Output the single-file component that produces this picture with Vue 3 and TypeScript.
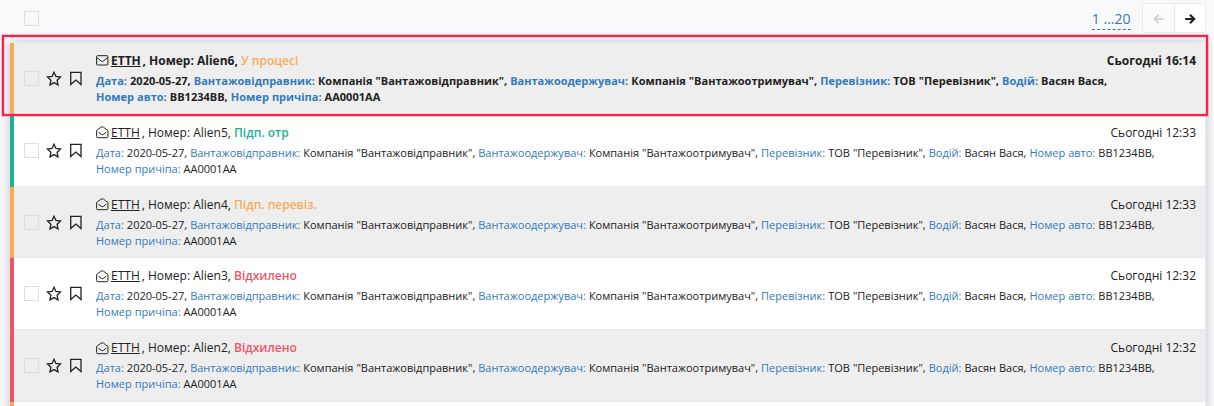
<script setup lang="ts">
interface Row {
  id: string
  status: string
  color: string
  stripe: string
  time: string
  unread?: boolean
  odd?: boolean
}

const ORANGE = '#f8ac59'
const GREEN = '#1ab394'
const RED = '#ed5565'

const rows: Row[] = [
  { id: 'Alien6', status: 'У процесі', color: ORANGE, stripe: ORANGE, time: '16:14', unread: true, odd: true },
  { id: 'Alien5', status: 'Підп. отр', color: GREEN, stripe: GREEN, time: '12:33' },
  { id: 'Alien4', status: 'Підп. перевіз.', color: ORANGE, stripe: ORANGE, time: '12:33', odd: true },
  { id: 'Alien3', status: 'Відхилено', color: RED, stripe: RED, time: '12:32' },
  { id: 'Alien2', status: 'Відхилено', color: RED, stripe: RED, time: '12:32', odd: true },
]

const details: [string, string][] = [
  ['Дата:', '2020-05-27,'],
  ['Вантажовідправник:', 'Компанія "Вантажовідправник",'],
  ['Вантажоодержувач:', 'Компанія "Вантажоотримувач",'],
  ['Перевізник:', 'ТОВ "Перевізник",'],
  ['Водій:', 'Васян Вася,'],
  ['Номер авто:', 'BB1234BB,'],
  ['Номер причіпа:', 'AA0001AA'],
]
</script>

<template>
  <div class="page">
    <header class="toolbar">
      <span class="check"></span>
      <span class="range">1 ...20</span>
      <div class="pager">
        <button class="prev" type="button">
          <svg width="11" height="10" viewBox="0 0 11 10"><path d="M10.4 5H1.8M5.6.8L1.4 5l4.200 4.200" /></svg>
        </button>
        <button class="next" type="button">
          <svg width="11" height="10" viewBox="0 0 11 10"><path d="M.2 5h8.600M5 .8L9.200 5 5 9.200" /></svg>
        </button>
      </div>
    </header>

    <main class="list">
      <article v-for="row in rows" :key="row.id" class="row" :class="{ odd: row.odd, unread: row.unread }">
        <i class="stripe" :style="{ background: row.stripe }"></i>
        <span class="check"></span>
        <svg class="star" width="16" height="15" viewBox="0 0 16 15">
          <path d="M8 1.3l1.9 4.2 4.7.5-3.5 3.2.9 4.7L8 11.6l-4 2.3.9-4.7L1.4 6l4.7-.5z" />
        </svg>
        <svg class="mark" width="12" height="15" viewBox="0 0 12 15">
          <path d="M.7 1.3h10.300v12.200L5.850 9.100.7 13.500z" />
        </svg>
        <div class="body">
          <div class="head">
            <svg v-if="row.unread" class="mail" width="13" height="13" viewBox="0 0 13 13">
              <rect x=".6" y="1.7" width="11.3" height="9.3" rx=".8" />
              <path d="M.8 3.6l4.700 3.700q.8.5 1.500 0l4.700-3.700" />
            </svg>
            <svg v-else class="mail" width="13" height="13" viewBox="0 0 13 13">
              <path d="M.6 4.5L5.1 1.2q1.2-.8 2.4 0l4.4 3.3v6q0 1.2-1.1 1.2H1.7Q.6 11.7.6 10.5z" />
              <path d="M2.4 6.3l3.100 2.200q.8.5 1.600 0l3.100-2.200" />
            </svg>
            <span class="title"><u>ЕТТН</u><span class="num">, Номер: {{ row.id }}, </span><b :style="{ color: row.color }">{{ row.status }}</b></span>
            <span class="time">Сьогодні {{ row.time }}</span>
          </div>
          <p class="details">
            <template v-for="[label, value] in details" :key="label"><span class="pair"><span class="label">{{ label }}</span> {{ value }}</span>{{ ' ' }}</template>
          </p>
        </div>
      </article>
      <div class="row upcoming"><i class="stripe orange"></i></div>
    </main>
    <div class="highlight"></div>
  </div>
</template>

<style>
body {
  overflow: hidden;
}
</style>

<style scoped>
.page {
  position: relative;
  box-sizing: border-box;
  width: 1214px;
  height: 406px;
  overflow: hidden;
  background: #f9f9fb;
  color: #212121;
  font: 12px/17px 'Open Sans', 'Noto Sans', sans-serif;
}
.toolbar {
  display: flex;
  align-items: flex-start;
  height: 41.85px;
  padding-left: 24px;
  padding-right: 8px;
}
.check {
  box-sizing: border-box;
  flex: none;
  width: 15px;
  height: 15px;
  border: 1px solid #ddddd9;
}
.toolbar .check {
  margin-top: 11px;
}
.range {
  height: 20px;
  margin: 9px 11.5px 0 auto;
  border-bottom: 1px dashed #337ab7;
  color: #337ab7;
  font-size: 14px;
  line-height: 19px;
}
.pager {
  display: flex;
  margin-top: 3px;
}
.pager button {
  display: flex;
  align-items: center;
  justify-content: center;
  box-sizing: border-box;
  width: 33px;
  height: 30px;
  padding: 2px 0 0;
  border: 1px solid #e7eaec;
  background: #fff;
}
.pager .prev {
  border-radius: 3px 0 0 3px;
  background: #fcfcfd;
}
.pager .next {
  width: 32px;
  margin-left: -1px;
  border-radius: 0 3px 3px 0;
}
.pager path {
  fill: none;
  stroke: #222;
  stroke-width: 2.1;
}
.pager .prev path {
  stroke: #d3d3d5;
}
.list {
  width: 1196px;
  height: 390px;
  margin-left: 10px;
  border-top: 1px solid #e7eaec;
  border-right: 1px solid #e7eaec;
  box-sizing: border-box;
  background: #fff;
  box-shadow: 0 0 10px rgba(70, 80, 110, 0.3);
}
.row {
  display: flex;
  box-sizing: border-box;
  height: 71.85px;
  border-bottom: 1px solid #e7eaec;
}
.row.odd {
  background: #eee;
}
.stripe {
  flex: none;
  width: 4px;
  height: 71.85px;
  margin-right: 10px;
}
.stripe.orange {
  background: #f8ac59;
}
.row .check {
  margin-top: 28px;
}
.star {
  margin: 28px 8px 0 7px;
}
.mark {
  margin: 28px 14px 0 0;
}
.star path,
.mark path {
  fill: none;
  stroke: #222;
  stroke-width: 1.3;
}
.body {
  flex: 1;
  min-width: 0;
  padding: 9px 9px 0 0;
}
.head {
  display: flex;
  height: 21px;
}
.mail {
  flex: none;
  margin: 2.5px 2px 0 0;
}
.mail rect,
.mail path {
  fill: none;
  stroke: #222;
  stroke-width: 1;
}
.title {
  white-space: pre;
}
.title u {
  text-decoration-thickness: 1px;
  text-underline-offset: 1px;
}
.num {
  margin-left: 2px;
}
.unread .num {
  margin-left: 1.7px;
}
.title b {
  font-weight: 600;
}
.time {
  margin-left: auto;
}
.details {
  margin: 0;
  padding-right: 20px;
  font-size: 11px;
  line-height: 16px;
  word-spacing: 0.16px;
}
.pair {
  white-space: nowrap;
}
.label {
  color: #337ab7;
}
.unread .title,
.unread .details,
.unread .time {
  font-weight: 700;
}
.unread .details {
  letter-spacing: 0.014px;
}
.highlight {
  position: absolute;
  top: 35px;
  left: 2px;
  box-sizing: border-box;
  width: 1206px;
  height: 81px;
  border: 2px solid #ff1f4b;
  box-shadow: 0 0 0 1px rgba(255, 31, 75, 0.25), inset 0 0 0 1px rgba(255, 31, 75, 0.12);
}
</style>
